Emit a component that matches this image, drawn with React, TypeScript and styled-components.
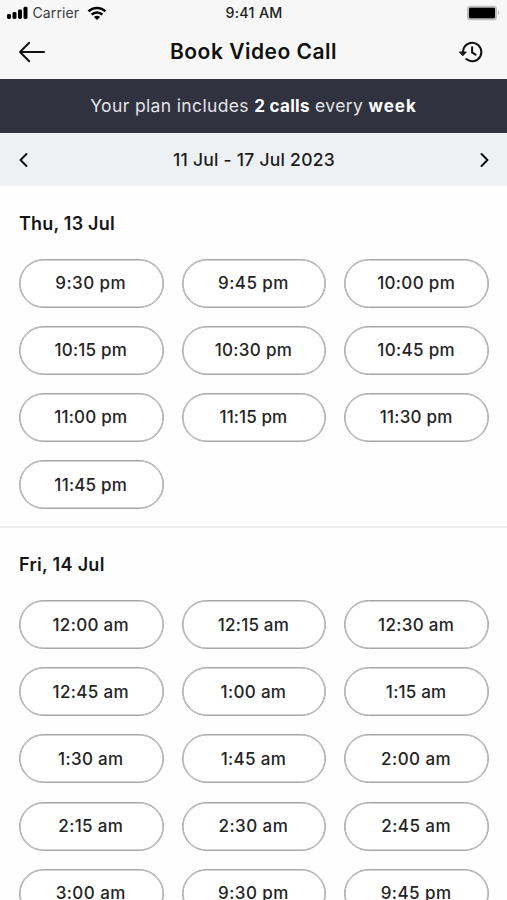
import React from "react";
import styled, { createGlobalStyle } from "styled-components";

const GlobalStyle = createGlobalStyle`
  * { box-sizing: border-box; }
  body { margin: 0; background: #fefefe; overflow: hidden; }
`;

const Screen = styled.main`
  width: 507px;
  height: 900px;
  overflow: hidden;
  background: #fefefe;
  color: #1c1c1e;
  font-family: Inter, "Liberation Sans", sans-serif;
`;

const StatusBar = styled.div`
  display: grid;
  grid-template-columns: 1fr auto 1fr;
  align-items: center;
  height: 26px;
  padding: 0 7px 0 6px;
  background: #f7f7f7;
  font-size: 14px;
  line-height: 26px;
`;

const StatusGroup = styled.div<{ $end?: boolean }>`
  display: flex;
  align-items: center;
  justify-content: ${(p) => (p.$end ? "flex-end" : "flex-start")};
  color: #3c3c3e;
  svg { flex: none; }
`;

const Carrier = styled.span`
  margin: 0 8px 0 4.5px;
  letter-spacing: 0.1px;
`;

const Clock = styled.span`
  margin-left: 2px;
  font-size: 14.25px;
  font-weight: 500;
  letter-spacing: 0.3px;
`;

const Header = styled.header`
  display: flex;
  align-items: center;
  justify-content: space-between;
  height: 53px;
  padding: 0 23px 2px 18px;
  background: #f7f7f7;
`;

const Title = styled.h1`
  margin: 0 0 0 3px;
  color: #111;
  font-size: 21px;
  font-weight: 600;
  line-height: 28px;
  letter-spacing: 0.5px;
`;

const IconButton = styled.button`
  display: flex;
  padding: 0;
  border: 0;
  background: none;
  color: #111;
`;

const Banner = styled.p`
  display: flex;
  justify-content: center;
  height: 54px;
  margin: 0;
  background: #31323f;
  color: #e3e3e9;
  font-size: 17.5px;
  line-height: 54px;
  letter-spacing: 0.36px;
  white-space: pre;
  strong {
    color: #fff;
    font-size: 17px;
    font-weight: 700;
    letter-spacing: 0.3px;
  }
  strong:last-child { letter-spacing: 1px; }
`;

const WeekBar = styled.nav`
  display: flex;
  align-items: center;
  justify-content: space-between;
  height: 53px;
  padding: 0 17px 0 18px;
  background: #edf1f4;
`;

const WeekLabel = styled.span`
  font-size: 17.5px;
  font-weight: 500;
  letter-spacing: 0.24px;
`;

const Day = styled.section`
  height: 341.5px;
  padding: 24.5px 18px 0 19px;
  border-bottom: 2px solid #ededee;
  &:last-child { border: 0; }
`;

const DayTitle = styled.h2<{ $spacing: number }>`
  margin: 0 0 22px;
  color: #161618;
  font-size: 18px;
  font-weight: 600;
  line-height: 26px;
  letter-spacing: ${(p) => p.$spacing}px;
`;

const SlotGrid = styled.div`
  display: grid;
  grid-template-columns: repeat(3, 144.5px);
  grid-auto-rows: 49px;
  gap: 18.2px;
`;

const Slot = styled.button<{ $spacing: number }>`
  padding: 0 1px 0 0;
  border: 1px solid #a5a6aa;
  border-radius: 25px;
  background: #fff;
  box-shadow: inset 0 0 0 0.6px #a5a6aa;
  color: #242426;
  font-family: inherit;
  font-size: 17px;
  font-weight: 500;
  line-height: 24px;
  letter-spacing: ${(p) => p.$spacing}px;
`;

const days = [
  {
    title: "Thu, 13 Jul",
    spacing: 0.2,
    slots: ["9:30 pm", "9:45 pm", "10:00 pm", "10:15 pm", "10:30 pm", "10:45 pm", "11:00 pm", "11:15 pm", "11:30 pm", "11:45 pm"],
  },
  {
    title: "Fri, 14 Jul",
    spacing: 0.3,
    slots: ["12:00 am", "12:15 am", "12:30 am", "12:45 am", "1:00 am", "1:15 am", "1:30 am", "1:45 am", "2:00 am", "2:15 am", "2:30 am", "2:45 am", "3:00 am", "9:30 pm", "9:45 pm"],
  },
];

// Tightens labels that contain the narrow numeral one.
const slotSpacing = (label: string) => 0.45 - 0.12 * (label.split("1").length - 1);

const Signal = () => (
  <svg width="22" height="14" viewBox="0 0 22 14" fill="#000">
    <rect x="1" y="8" width="4" height="5" rx="1.4" />
    <rect x="6.5" y="6" width="4" height="7" rx="1.4" />
    <rect x="12" y="3.5" width="4" height="9.5" rx="1.4" />
    <rect x="17.5" y="0.8" width="4" height="12.2" rx="1.4" />
  </svg>
);

const Wifi = () => (
  <svg width="20" height="15" viewBox="0 0 20 15" fill="none" stroke="#000" strokeWidth="2.5">
    <path d="M1.5 5.4C6.2.7 13.8.7 18.5 5.4M4.6 8.7C7.6 5.8 12.4 5.8 15.4 8.7" />
    <path d="M6.9 11C8.7 9.4 11.3 9.4 13.1 11L10 14Z" fill="#000" stroke="none" />
  </svg>
);

const Battery = () => (
  <svg width="34" height="16" viewBox="0 0 34 16">
    <rect x="1" y=".7" width="30" height="14.6" rx="3.2" fill="#bdbdbd" />
    <rect x="3" y="2.7" width="26" height="10.6" rx="1.4" fill="#000" />
    <path d="M32 5.5Q34.5 7.8 32 10Z" fill="#aaa" />
  </svg>
);

const Back = () => (
  <svg width="28" height="24" viewBox="0 0 28 24" fill="none" stroke="currentColor" strokeWidth="2" strokeLinecap="round" strokeLinejoin="round">
    <path d="M26 12H2M11.2 2.8L2 12L11.2 21.2" />
  </svg>
);

const History = () => (
  <svg width="26" height="24" viewBox="0 0 26 24" fill="none" stroke="currentColor" strokeWidth="2" strokeLinecap="round">
    <path d="M5 13V11.7A9.2 9.2 0 1 1 8.3 19.1M14.1 7.3V12.4L17.5 14.6" />
    <path d="M1.7 12H8.3L5 15.6Z" fill="currentColor" strokeWidth="1" strokeLinejoin="round" />
  </svg>
);

const Chevron = ({ next = false }: { next?: boolean }) => (
  <svg width="12" height="16" viewBox="0 0 12 16" fill="none" stroke="currentColor" strokeWidth="2" strokeLinecap="round" strokeLinejoin="round">
    <path d={next ? "M3.5 2L9.5 8L3.5 14" : "M8.5 2L2.5 8L8.5 14"} />
  </svg>
);

export default function App() {
  return (
    <>
      <GlobalStyle />
      <Screen>
        <StatusBar>
          <StatusGroup><Signal /><Carrier>Carrier</Carrier><Wifi /></StatusGroup>
          <Clock>9:41 AM</Clock>
          <StatusGroup $end><Battery /></StatusGroup>
        </StatusBar>
        <Header>
          <IconButton aria-label="Back"><Back /></IconButton>
          <Title>Book Video Call</Title>
          <IconButton aria-label="Call history"><History /></IconButton>
        </Header>
        <Banner>Your plan includes <strong>2 calls</strong> every <strong>week</strong></Banner>
        <WeekBar>
          <IconButton aria-label="Previous week"><Chevron /></IconButton>
          <WeekLabel>11 Jul - 17 Jul 2023</WeekLabel>
          <IconButton aria-label="Next week"><Chevron next /></IconButton>
        </WeekBar>
        {days.map((day) => (
          <Day key={day.title}>
            <DayTitle $spacing={day.spacing}>{day.title}</DayTitle>
            <SlotGrid>
              {day.slots.map((slot) => <Slot key={slot} $spacing={slotSpacing(slot)}>{slot}</Slot>)}
            </SlotGrid>
          </Day>
        ))}
      </Screen>
    </>
  );
}
